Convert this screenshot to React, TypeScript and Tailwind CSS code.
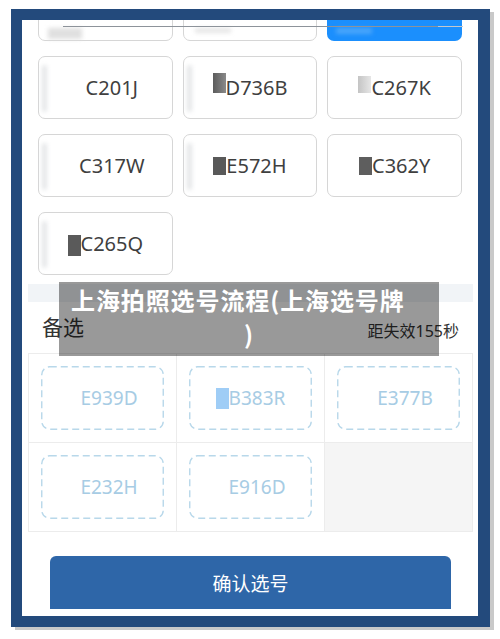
import React from "react";

type P = { text: string; block: string; smudge?: boolean; blockShift?: string };

function Plate({ text, block, smudge, blockShift }: P) {
  return (
    <div className="relative flex h-[63px] items-center justify-center rounded-[7px] border border-[#d6d6d6] bg-white text-[20px] text-[#3f3f3f]">
      {smudge && (
        <span className="absolute bottom-[6px] left-[3px] top-[8px] w-[5px] rounded bg-[#e4e6e8] blur-[2px]" />
      )}
      <span className={`inline-block w-[13px] ${block} ${blockShift ?? ""}`} />
      <span className="leading-none">{text}</span>
    </div>
  );
}

type C = { text: string; block?: string };

function Cand({ text, block }: C) {
  return (
    <div className="h-[89px] border-b border-r border-[#ececec] p-[12px]">
      <div className="relative flex h-full items-center justify-center text-[19px] text-[#a7cce4]">
        <svg className="absolute inset-0 h-full w-full" preserveAspectRatio="none">
          <rect x="0.75" y="0.75" width="121" height="62" rx="8" fill="none" stroke="#b8d8ea" strokeWidth="1.4" strokeDasharray="7 4" style={{ width: "calc(100% - 1.5px)", height: "calc(100% - 1.5px)" }} />
        </svg>
        <span className={`inline-block h-[21px] w-[13px] ${block ?? "bg-transparent"}`} />
        <span className="leading-none">{text}</span>
      </div>
    </div>
  );
}

export default function App() {
  return (
    <div className="relative h-[639px] w-[500px] overflow-hidden bg-white font-['Noto_Sans','Noto_Sans_CJK_SC',sans-serif]">
      <div className="pl-[11px] pt-[9px]">
        <div className="h-[618px] w-[479px] border-b-[11px] border-l-[11px] border-r-[12px] border-t-[11px] border-[#234a7c] shadow-[4px_3px_0_#c9c9c9]">
          <div className="relative h-full w-full overflow-hidden bg-white">
            {/* top plates grid */}
            <div className="-mt-[42px] grid grid-cols-3 gap-x-[10px] gap-y-[15px] px-[16px]">
              <div className="relative h-[63px] rounded-[7px] border border-[#d6d6d6] bg-white">
                <span className="absolute bottom-[1px] left-[9px] h-[11px] w-[34px] bg-[#e0e0e0] blur-[2px]" />
              </div>
              <div className="relative h-[63px] rounded-[7px] border border-[#d6d6d6] bg-white">
                <span className="absolute bottom-[7px] left-[11px] h-[5px] w-[36px] bg-[#e6e6e6] blur-[2px]" />
              </div>
              <div className="relative h-[63px] rounded-[7px] bg-[#1b8ffd]">
                <span className="absolute bottom-[7px] left-[9px] h-[6px] w-[36px] bg-[#4aa6fb] blur-[2px]" />
              </div>
              <Plate text="C201J" block="h-[18px] bg-transparent" smudge />
              <Plate text="D736B" block="h-[20px] bg-gradient-to-r from-[#5c5c5c] to-[#8a8a8a]" blockShift="mb-[9px]" smudge />
              <Plate text="C267K" block="h-[17px] bg-gradient-to-r from-[#c4c4c4] to-[#e6e6e6]" blockShift="mb-[7px]" />
              <Plate text="C317W" block="h-[18px] bg-transparent" smudge />
              <Plate text="E572H" block="h-[18px] bg-[#595959]" smudge />
              <Plate text="C362Y" block="h-[18px] bg-[#5e5e5e]" />
              <Plate text="C265Q" block="h-[21px] bg-[#5a5a5a]" blockShift="mt-[3px]" smudge />
            </div>
            <div className="absolute left-[41px] top-[6px] h-px w-[375px] bg-[#8d939a]" />
            <div className="absolute left-[416px] top-[6px] h-px w-[25px] bg-[#c4c8cc]" />

            {/* lower section */}
            <div className="ml-[6px] mr-[5px]">
              <div className="mt-[9px] h-[18px] bg-[#f1f4f7]" />
              <div className="flex h-[51px] items-center justify-between px-[14px]">
                <span className="text-[21px] leading-none text-[#333]">备选</span>
                <span className="pt-[6px] text-[16px] leading-none text-[#333]">距失效155秒</span>
              </div>
              <div className="grid grid-cols-3 border-l border-t border-[#ececec]">
                <Cand text="E939D" />
                <Cand text="B383R" block="bg-[#9fcdf6]" />
                <Cand text="E377B" />
                <Cand text="E232H" />
                <Cand text="E916D" />
                <div className="h-[89px] border-b border-r border-[#ececec] bg-[#f5f5f5]" />
              </div>
              <div className="mx-[22px] mt-[24px] flex h-[53px] items-center justify-center rounded-t-[6px] bg-[#2e66a8] pt-[4px] text-[19px] text-white">
                确认选号
              </div>
            </div>
          </div>
        </div>
      </div>

      {/* caption overlay */}
      <div className="absolute left-[59px] top-[282px] h-[74px] w-[380px] bg-black/40 pt-[1px] font-['Noto_Sans_CJK_SC',sans-serif] text-[24px] font-bold leading-[34px] tracking-[0.9px] text-white">
        <div className="pl-[12px]">上海拍照选号流程(上海选号牌</div>
        <div className="text-center">)</div>
      </div>
    </div>
  );
}
